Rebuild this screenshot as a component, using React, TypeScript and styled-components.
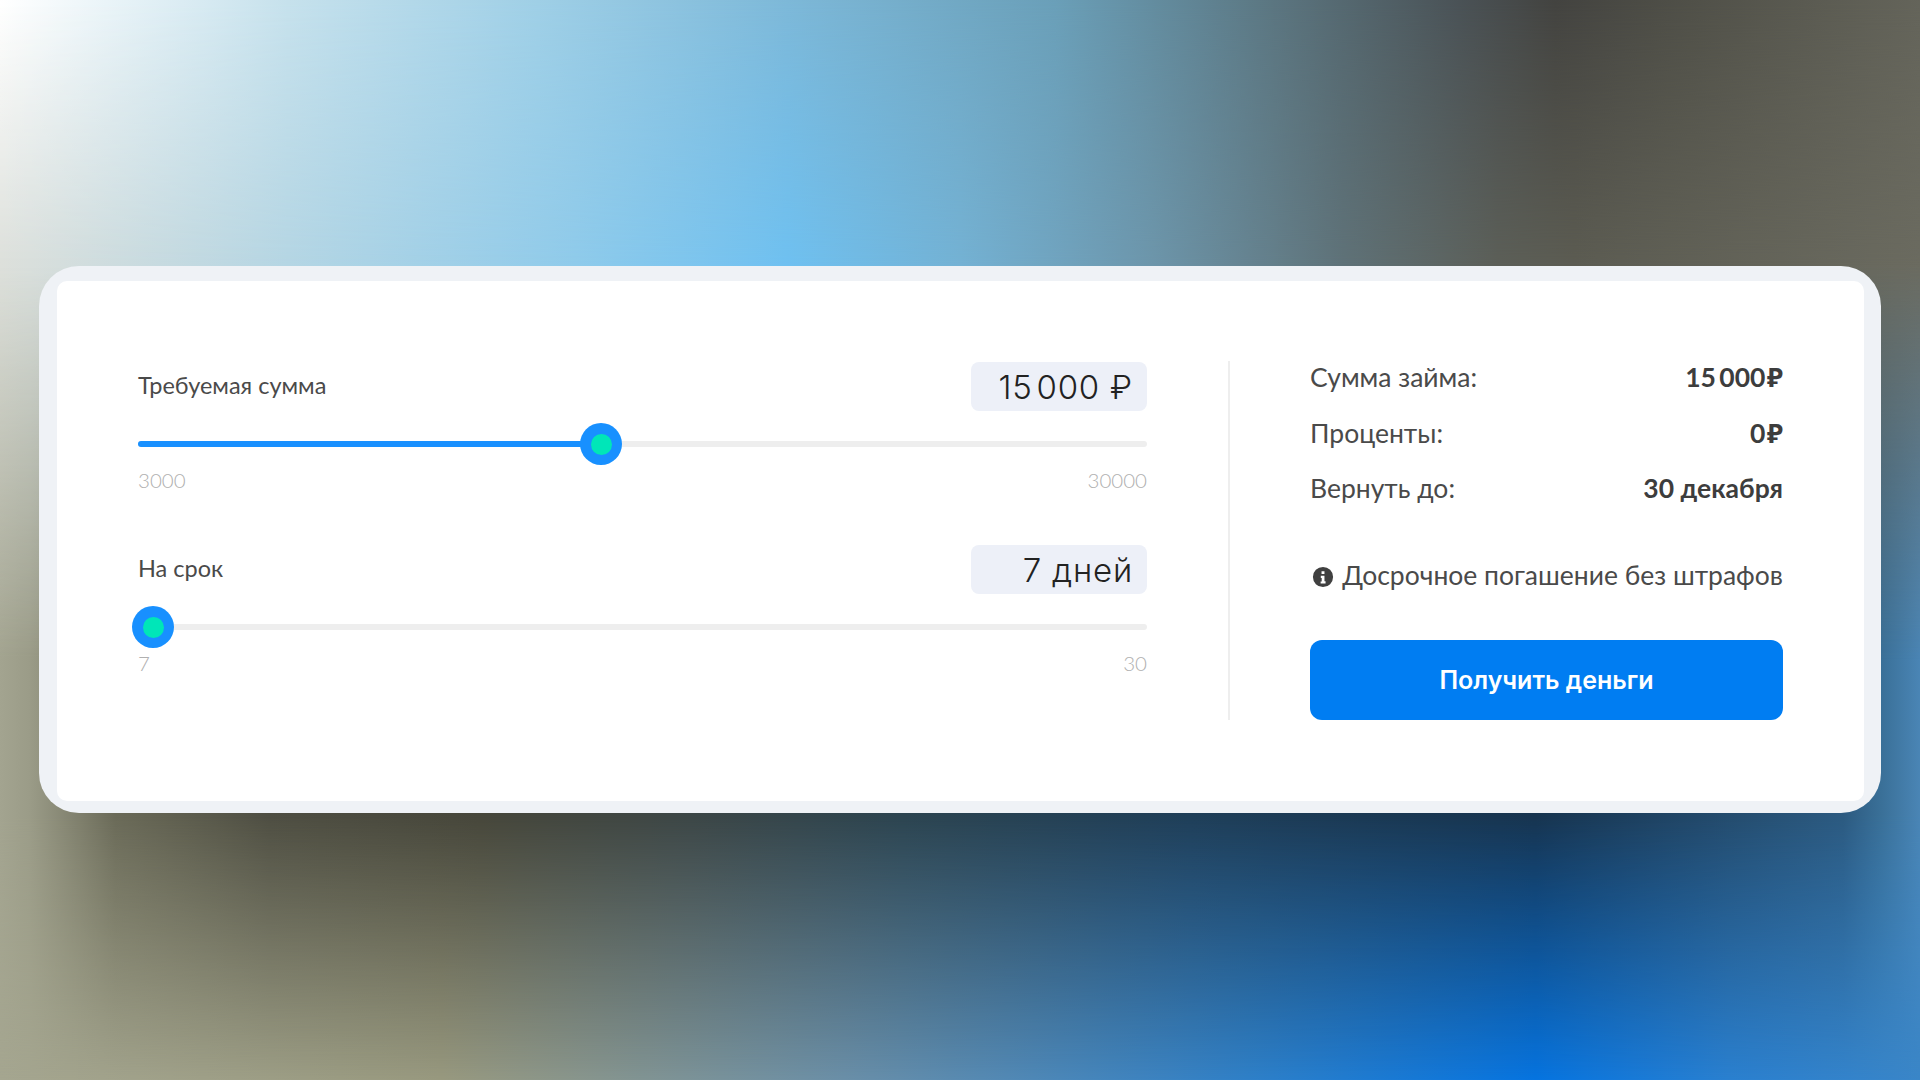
import React from 'react'
import styled, { createGlobalStyle } from 'styled-components'

const GlobalStyle = createGlobalStyle`
  html, body {
    margin: 0;
    padding: 0;
    width: 1920px;
    height: 1080px;
    overflow: hidden;
    font-family: 'Lato', 'Noto Sans', sans-serif;
  }
  * {
    box-sizing: border-box;
  }
`

const Page = styled.div`
  position: relative;
  isolation: isolate;
  width: 1920px;
  height: 1080px;
  padding: 266px 39px 0;
  background: linear-gradient(90deg, #a5a690 0%, #98997f 23%, #6a8fa8 44%, #2f80c8 65%, #0674e0 80%, #2a80d0 90%, #3a86c8 100%);
`

// soft colour fields behind the card, each one fades into the next going down
const GlowTop = styled.div`
  position: absolute;
  inset: 0;
  z-index: -1;
  background: linear-gradient(90deg, #ffffff 0%, #c6e1ec 15%, #9fcfe6 28%, #7db8d8 41%, #6a9fb8 55%, #5a737d 67%, #4a5256 76%, #434340 81%, #505048 88%, #64645a 100%);
  mask-image: linear-gradient(180deg, #000 0, transparent 266px);
`

const GlowMiddle = styled.div`
  position: absolute;
  inset: 0;
  z-index: -2;
  background: linear-gradient(90deg, #dde0db 0%, #b5d6e4 15%, #8fcbeb 30%, #6fc1f1 41%, #74b2d4 50%, #6d96ab 60%, #5f7278 70%, #5c5f58 78%, #5c5c52 82%, #6b6b60 100%);
  mask-image: linear-gradient(180deg, #000 266px, transparent 660px);
`

const GlowBottom = styled.div`
  position: absolute;
  inset: 0;
  z-index: -3;
  background: linear-gradient(90deg, #a3a490 0%, #9b9c88 1.5%, #6a6a58 6%, #4e4e42 14%, #46463a 25%, #3c4646 36%, #2c4450 47%, #1f3e58 62%, #17344f 80%, #2c5a80 96%, #3a7098 98%, #4a85b5 100%);
  mask-image: linear-gradient(180deg, #000 815px, transparent 1080px);
`

const Card = styled.div`
  width: 1842px;
  height: 547px;
  padding: 15px 17px 12px 18px;
  border-radius: 40px;
  background: #eff2f6;
`

const CardInner = styled.div`
  display: flex;
  height: 100%;
  padding: 80px 81px 81px;
  border-radius: 10px;
  background: #ffffff;
`

const Calculator = styled.div`
  display: flex;
  flex-direction: column;
  gap: 52px;
  width: 1009px;
  padding-top: 1px;
`

const Field = styled.div`
  display: flex;
  flex-direction: column;
`

const FieldHeader = styled.div`
  display: flex;
  align-items: center;
  justify-content: space-between;
`

const FieldLabel = styled.span`
  margin-bottom: 3px;
  font-size: 23.5px;
  color: #4a4a4a;
`

const ValueBadge = styled.div`
  display: flex;
  align-items: center;
  justify-content: flex-end;
  width: 176px;
  height: 49px;
  padding-right: 14px;
  border-radius: 8px;
  background: #edf0f8;
  font-family: 'Inter', 'Noto Sans', sans-serif;
  font-size: 33px;
  font-weight: 350;
  letter-spacing: 0.8px;
  color: #222222;
`

const Track = styled.div`
  position: relative;
  height: 6px;
  margin-top: 30px;
  border-radius: 3px;
  background: #eeeeee;
`

const TrackFill = styled.div`
  height: 100%;
  border-radius: 3px;
  background: #1890ff;
`

const Thumb = styled.div`
  position: absolute;
  top: 50%;
  display: flex;
  align-items: center;
  justify-content: center;
  width: 42px;
  height: 42px;
  border-radius: 50%;
  background: #1890ff;
  transform: translate(-50%, -50%);

  &::after {
    content: '';
    width: 21px;
    height: 21px;
    border-radius: 50%;
    background: #00e6b8;
  }
`

const Limits = styled.div`
  display: flex;
  justify-content: space-between;
  margin-top: 20px;
  font-size: 20.5px;
  font-weight: 300;
  line-height: 26px;
  color: #b0b0b0;
`

const Divider = styled.div`
  width: 2px;
  margin: 0 80px 0 81px;
  background: #eeeeee;
`

const Summary = styled.div`
  display: flex;
  flex-direction: column;
  flex: 1;
`

const SummaryRows = styled.div`
  display: flex;
  flex-direction: column;
  gap: 23.6px;
`

const SummaryRow = styled.div`
  display: flex;
  justify-content: space-between;
  font-size: 26.5px;
  line-height: 32px;
  color: #4a4a4a;
`

const SummaryValue = styled.span`
  font-weight: 700;
  color: #3d3d3d;
`

const Note = styled.div`
  display: flex;
  align-items: center;
  justify-content: space-between;
  margin-top: 55px;
  font-size: 26.5px;
  line-height: 32px;
  color: #4a4a4a;
`

const InfoIcon = styled.svg`
  width: 22px;
  height: 22px;
  margin: 3px 0 0 2px;
  fill: #404040;
`

const SubmitButton = styled.button`
  height: 80px;
  margin-top: auto;
  border: none;
  border-radius: 12px;
  background: #007df2;
  font-family: 'Inter', 'Noto Sans', sans-serif;
  font-size: 25px;
  font-weight: 600;
  color: #ffffff;
`

const Slider: React.FC<{ percent: number; fill?: boolean }> = ({ percent, fill }) => (
  <Track>
    {fill && <TrackFill style={{ width: `${percent}%` }} />}
    <Thumb style={{ left: `calc(${percent}% + ${percent === 0 ? 15 : 0}px)` }} />
  </Track>
)

const App: React.FC = () => {
  return (
    <Page>
      <GlobalStyle />
      <GlowTop />
      <GlowMiddle />
      <GlowBottom />
      <Card>
        <CardInner>
          <Calculator>
            <Field>
              <FieldHeader>
                <FieldLabel>Требуемая сумма</FieldLabel>
                <ValueBadge>15{'\u200A'}000 ₽</ValueBadge>
              </FieldHeader>
              <Slider percent={45.9} fill />
              <Limits>
                <span>3000</span>
                <span>30000</span>
              </Limits>
            </Field>
            <Field>
              <FieldHeader>
                <FieldLabel>На срок</FieldLabel>
                <ValueBadge>7 дней</ValueBadge>
              </FieldHeader>
              <Slider percent={0} />
              <Limits>
                <span>7</span>
                <span>30</span>
              </Limits>
            </Field>
          </Calculator>
          <Divider />
          <Summary>
            <SummaryRows>
              <SummaryRow>
                <span>Сумма займа:</span>
                <SummaryValue>15{'\u2009'}000{'\u200A'}₽</SummaryValue>
              </SummaryRow>
              <SummaryRow>
                <span>Проценты:</span>
                <SummaryValue>0{'\u200A'}₽</SummaryValue>
              </SummaryRow>
              <SummaryRow>
                <span>Вернуть до:</span>
                <SummaryValue>30 декабря</SummaryValue>
              </SummaryRow>
            </SummaryRows>
            <Note>
              <InfoIcon viewBox="0 0 24 24">
                <path
                  fillRule="evenodd"
                  d="M12 1a11 11 0 1 0 0 22 11 11 0 0 0 0-22Zm-1.6 4.6h3.2v3h-3.2v-3Zm-.8 5h4v6h1.2v2.4H9.4V17h1.2v-4H9.6v-2.4Z"
                />
              </InfoIcon>
              <span>Досрочное погашение без штрафов</span>
            </Note>
            <SubmitButton>Получить деньги</SubmitButton>
          </Summary>
        </CardInner>
      </Card>
    </Page>
  )
}

export default App
